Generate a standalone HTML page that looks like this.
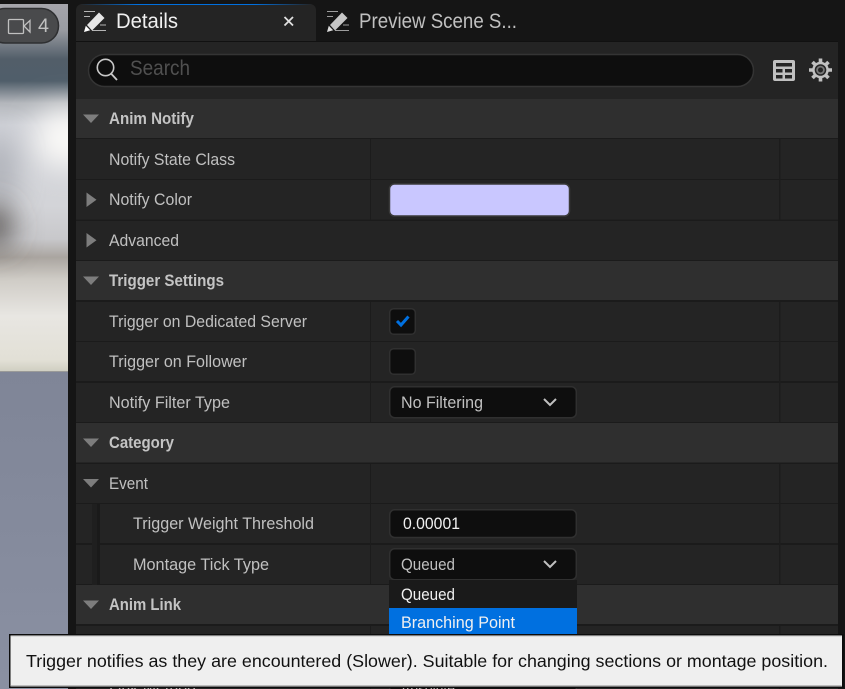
<!DOCTYPE html>
<html><head><meta charset="utf-8"><title>Details</title>
<style>html,body{margin:0;padding:0;background:#151515;overflow:hidden}svg{display:block}
text{font-family:"Liberation Sans",sans-serif;font-size:16.500px;fill:#c0c0c0}
.b{font-weight:bold;fill:#c4c4c4}.w{fill:#f0f0f0}</style></head><body>
<svg xmlns="http://www.w3.org/2000/svg" width="845" height="689" viewBox="0 0 845 689">
<defs>
<linearGradient id="v" x1="0" y1="0" x2="0" y2="1">
<stop offset="0" stop-color="#a5a5ab"/><stop offset=".07" stop-color="#9a9ca2"/><stop offset=".15" stop-color="#525e69"/><stop offset=".21" stop-color="#505e6a"/><stop offset=".27" stop-color="#b4b7bc"/><stop offset=".33" stop-color="#d0d2d8"/><stop offset=".55" stop-color="#d3d4d8"/><stop offset=".64" stop-color="#c8c8cb"/><stop offset=".69" stop-color="#aaa5a0"/><stop offset=".75" stop-color="#cfccc6"/><stop offset=".85" stop-color="#e8e6e2"/><stop offset=".97" stop-color="#e2e0d6"/><stop offset="1" stop-color="#d0cfc2"/>
</linearGradient>
<linearGradient id="sl" x1="0" y1="0" x2="0" y2="1"><stop offset="0" stop-color="#7f8597"/><stop offset="1" stop-color="#8a90a2"/></linearGradient>
<linearGradient id="blue" x1="0" y1="0" x2="1" y2="0"><stop offset="0" stop-color="#0070e0" stop-opacity="0"/><stop offset=".25" stop-color="#0070e0"/><stop offset=".75" stop-color="#0070e0"/><stop offset="1" stop-color="#0070e0" stop-opacity="0"/></linearGradient>
<filter id="bl" x="-100%" y="-100%" width="300%" height="300%"><feGaussianBlur stdDeviation="15"/></filter>
<clipPath id="vc"><rect x="0" y="4" width="68" height="367"/></clipPath>
<g id="pen">
<path d="M0 .5h11M0 5.500h6M16 14h6M8 19.500h14" stroke="#b5b5b5" stroke-width="1.100" fill="none"/>
<path d="M3 14L15 1.500 20.500 7 8 19.500Z" fill="#e6e6e6"/>
<path d="M0 21L1.800 14.800 6.200 19.200Z" fill="#fff"/>
</g>
<path id="chev" d="M0 0L6 6 12 0" fill="none" stroke="#c0c0c0" stroke-width="2"/>
<path id="down" d="M0 0H16L8 8.500Z" fill="#7d7d7d"/>
<path id="right" d="M0 0V14.500L10 7.200Z" fill="#7d7d7d"/>
</defs>
<rect width="845" height="689" fill="#151515"/>
<!-- viewport -->
<rect x="0" y="4" width="68" height="367" fill="url(#v)"/>
<g clip-path="url(#vc)">
<ellipse cx="66" cy="138" rx="32" ry="30" fill="#fbfaf8" filter="url(#bl)"/>
<ellipse cx="-2" cy="170" rx="16" ry="34" fill="#a8abb3" filter="url(#bl)"/>
<ellipse cx="-6" cy="226" rx="18" ry="22" fill="#4d4a47" filter="url(#bl)"/>
</g>
<rect x="0" y="371" width="68" height="318" fill="url(#sl)"/>
<rect x="0" y="371" width="68" height="1" fill="#9a9a98"/>
<!-- camera pill -->
<rect x="-12" y="8.500" width="70.500" height="34.500" rx="17" fill="#494a4c" stroke="#2e2f31" stroke-width="1.500"/>
<rect x="8.500" y="19.500" width="15" height="14" rx="1" fill="none" stroke="#c0c0c0" stroke-width="1.300"/>
<path d="M30 20.500V32L24.500 26.500V25.500Z" fill="none" stroke="#c0c0c0" stroke-width="1.300"/>
<text x="38" y="32" textLength="11" lengthAdjust="spacingAndGlyphs" style="font-size:19px">4</text>
<!-- tabs -->
<path d="M76 41V10a6 6 0 0 1 6-6H310a6 6 0 0 1 6 6V41Z" fill="#242424"/>
<rect x="80" y="4" width="232" height="1" fill="url(#blue)"/>
<use href="#pen" transform="translate(84 11)"/>
<text class="w" x="116" y="28" textLength="62" lengthAdjust="spacingAndGlyphs" style="font-size:21px">Details</text>
<path d="M284.500 17L293 25.500M293 17L284.500 25.500" stroke="#e0e0e0" stroke-width="1.800" fill="none"/>
<g opacity=".85"><use href="#pen" transform="translate(327 11)"/></g>
<text x="359" y="28" textLength="158" lengthAdjust="spacingAndGlyphs" style="font-size:21px">Preview Scene S...</text>
<!-- panel -->
<rect x="76" y="42" width="762" height="647" fill="#242424"/>
<rect x="76" y="41" width="762" height="1" fill="#111"/>
<!-- search -->
<rect x="88.500" y="54.500" width="665" height="32" rx="16" fill="#0e0e0e" stroke="#343434" stroke-width="1.500"/>
<circle cx="105.500" cy="67.500" r="8.200" fill="none" stroke="#c8c8c8" stroke-width="1.600"/>
<path d="M111 73.500L117 80" stroke="#c8c8c8" stroke-width="1.800"/>
<text x="130" y="75" textLength="60" lengthAdjust="spacingAndGlyphs" style="font-size:21px;fill:#505050">Search</text>
<!-- table icon -->
<rect x="773" y="60" width="22" height="21" rx="2" fill="#c0c0c0"/>
<g fill="#242424"><rect x="776" y="63" width="16" height="3.500"/><rect x="776" y="69" width="6.500" height="3.500"/><rect x="785" y="69" width="7" height="3.500"/><rect x="776" y="75" width="6.500" height="3.500"/><rect x="785" y="75" width="7" height="3.500"/></g>
<!-- gear -->
<g transform="translate(820.500 70)">
<g stroke="#c0c0c0" stroke-width="3.600"><path d="M0-11.500V11.500M-11.500 0H11.500M-8-8L8 8M8-8L-8 8"/></g>
<circle r="8.300" fill="#c0c0c0"/><circle r="5.800" fill="#242424"/><circle r="4.300" fill="#777"/><circle r="2.500" fill="#242424"/>
</g>
<!-- section headers -->
<g fill="#2f2f2f">
<rect x="76" y="99" width="762" height="39"/>
<rect x="76" y="261" width="762" height="39"/>
<rect x="76" y="423" width="762" height="39.500"/>
<rect x="76" y="585" width="762" height="39"/>
</g>
<!-- row separators -->
<g fill="#1b1b1b">
<rect x="76" y="138" width="762" height="1"/>
<rect x="76" y="179" width="762" height="1"/>
<rect x="76" y="219.500" width="762" height="1.500"/>
<rect x="76" y="260" width="762" height="1"/>
<rect x="76" y="300" width="762" height="2"/>
<rect x="76" y="341" width="762" height="1"/>
<rect x="76" y="381" width="762" height="2"/>
<rect x="76" y="422" width="762" height="1"/>
<rect x="76" y="462.500" width="762" height="1.500"/>
<rect x="76" y="503" width="762" height="1"/>
<rect x="76" y="543" width="762" height="2"/>
<rect x="76" y="584" width="762" height="1"/>
<rect x="76" y="624" width="762" height="2"/>
<rect x="76" y="665" width="762" height="1"/>
</g>
<!-- columns -->
<g fill="#1c1c1c">
<rect x="370" y="139" width="1" height="81"/>
<rect x="779" y="139" width="1.500" height="81"/>
<rect x="370" y="302" width="1" height="120"/>
<rect x="779" y="302" width="1.500" height="120"/>
<rect x="370" y="464" width="1" height="120"/>
<rect x="779" y="464" width="1.500" height="120"/>
<rect x="370" y="626" width="1" height="63"/>
<rect x="779" y="626" width="1.500" height="63"/>
</g>
<!-- indent -->
<rect x="92" y="504" width="5" height="81" fill="#1f1f1f"/>
<rect x="97" y="504" width="3" height="81" fill="#1a1a1a"/>
<!-- arrows -->
<use href="#down" x="83" y="114.500"/>
<use href="#right" x="86.500" y="192.500"/>
<use href="#right" x="86.500" y="233"/>
<use href="#down" x="83" y="276.500"/>
<use href="#down" x="83" y="438.500"/>
<use href="#down" x="83" y="479"/>
<use href="#down" x="83" y="600.500"/>
<!-- labels -->
<text class="b" x="109" y="124" textLength="85" lengthAdjust="spacingAndGlyphs">Anim Notify</text>
<text x="109" y="165" textLength="126" lengthAdjust="spacingAndGlyphs">Notify State Class</text>
<text x="109" y="205" textLength="83" lengthAdjust="spacingAndGlyphs">Notify Color</text>
<text x="109" y="246" textLength="70" lengthAdjust="spacingAndGlyphs">Advanced</text>
<text class="b" x="109" y="286" textLength="115" lengthAdjust="spacingAndGlyphs">Trigger Settings</text>
<text x="109" y="327" textLength="198" lengthAdjust="spacingAndGlyphs">Trigger on Dedicated Server</text>
<text x="109" y="367" textLength="138" lengthAdjust="spacingAndGlyphs">Trigger on Follower</text>
<text x="109" y="408" textLength="121" lengthAdjust="spacingAndGlyphs">Notify Filter Type</text>
<text class="b" x="109" y="448" textLength="65" lengthAdjust="spacingAndGlyphs">Category</text>
<text x="109" y="489" textLength="39" lengthAdjust="spacingAndGlyphs">Event</text>
<text x="133" y="529" textLength="181" lengthAdjust="spacingAndGlyphs">Trigger Weight Threshold</text>
<text x="133" y="570" textLength="136" lengthAdjust="spacingAndGlyphs">Montage Tick Type</text>
<text class="b" x="109" y="610" textLength="72" lengthAdjust="spacingAndGlyphs">Anim Link</text>
<text x="109" y="692" textLength="87" lengthAdjust="spacingAndGlyphs">Link Method</text>
<!-- values -->
<rect x="389.500" y="184" width="180" height="32" rx="5" fill="#c9c7ff" stroke="#3a3a3a" stroke-width="1.500"/>
<g fill="#0e0e0e" stroke="#303030" stroke-width="1.500">
<rect x="389.700" y="308.700" width="25.600" height="25.600" rx="4"/>
<rect x="389.700" y="348.700" width="25.600" height="25.600" rx="4"/>
<rect x="389.700" y="386.700" width="186.600" height="31" rx="5"/>
<rect x="389.700" y="509.700" width="186.600" height="27.800" rx="5"/>
<rect x="389.700" y="548.700" width="186.600" height="31" rx="5"/>
<rect x="389.700" y="672" width="186.600" height="31" rx="5"/>
</g>
<path d="M397 321L401 325 408.500 316.500" fill="none" stroke="#0070e0" stroke-width="3"/>
<text x="401" y="408" textLength="82" lengthAdjust="spacingAndGlyphs">No Filtering</text>
<use href="#chev" x="544" y="399"/>
<text class="w" x="403" y="529" textLength="57" lengthAdjust="spacingAndGlyphs">0.00001</text>
<text x="401" y="570" textLength="54" lengthAdjust="spacingAndGlyphs">Queued</text>
<use href="#chev" x="544" y="561"/>
<text x="401" y="694" textLength="54" lengthAdjust="spacingAndGlyphs">Absolute</text>
<!-- popup -->
<rect x="389" y="580" width="188" height="28" fill="#1a1a1a"/>
<rect x="389" y="608" width="188" height="27" fill="#0070e0"/>
<text class="w" x="401" y="600" textLength="54" lengthAdjust="spacingAndGlyphs">Queued</text>
<text class="w" x="401" y="628" textLength="114" lengthAdjust="spacingAndGlyphs">Branching Point</text>
<!-- tooltip -->
<rect x="9.750" y="634.750" width="833" height="52.500" fill="#efefef" stroke="#0c0c0c" stroke-width="1.500"/>
<rect x="11" y="636" width="830.500" height="1" fill="#dadada"/>
<rect x="11" y="685" width="830.500" height="1.200" fill="#bdbdbd"/>
<text x="26" y="667" textLength="802" lengthAdjust="spacingAndGlyphs" style="font-size:17.500px;fill:#111">Trigger notifies as they are encountered (Slower). Suitable for changing sections or montage position.</text>
</svg>
</body></html>
